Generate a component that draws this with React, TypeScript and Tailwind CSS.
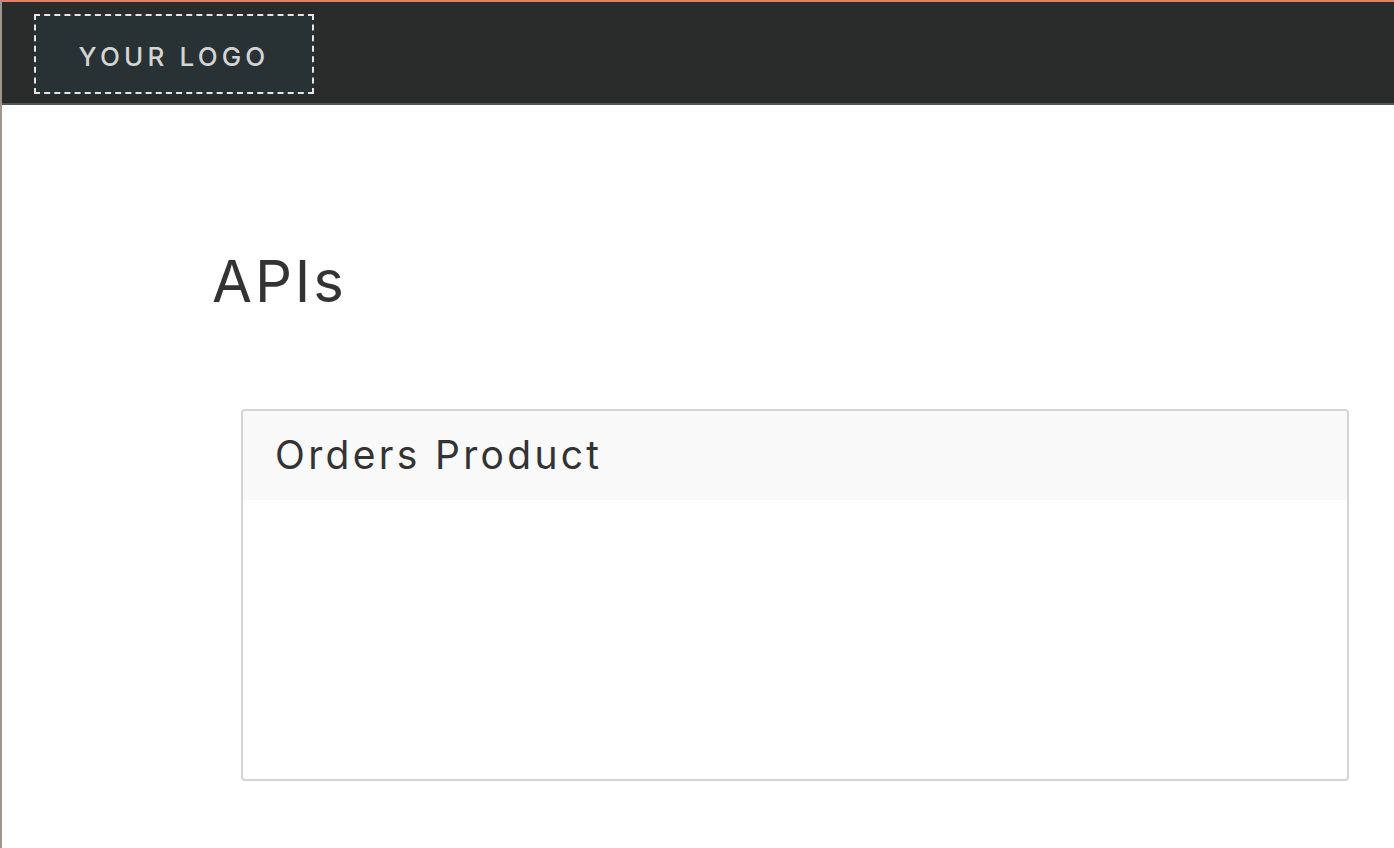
export default function App() {
  return (
    <div
      className="min-h-[848px] w-full bg-white border-l-2 border-[#9e968e] text-[#333333]"
      style={{ fontFamily: "Inter, 'Open Sans', sans-serif" }}
    >
      {/* Top bar */}
      <header className="h-[105px] bg-[#2a2c2c] border-t-2 border-[#e0806a] border-b-2 border-b-[#555757] flex items-start pt-[12px] pl-8">
        <div className="w-[280px] h-[80px] bg-[#283133] border-2 border-dashed border-[#e6e6e6] flex items-center justify-center pt-[4px]">
          <span className="text-[26px] font-medium tracking-[0.16em] text-[#d4d4d4]">YOUR LOGO</span>
        </div>
      </header>

      {/* Content */}
      <main className="pl-[210px] pr-[45px]">
        <h1 className="mt-[140px] text-[58px] leading-[72px] font-normal tracking-[0.05em] text-[#333333]">APIs</h1>

        <section className="mt-[92px] ml-[29px] h-[372px] border-2 border-[#d4d4d4] rounded-[4px] overflow-hidden">
          <div className="h-[89px] bg-[#f9f9f9] flex items-center pl-[32px]">
            <h2 className="text-[39px] font-normal tracking-[0.085em] text-[#333333]">Orders Product</h2>
          </div>
        </section>
      </main>
    </div>
  );
}
